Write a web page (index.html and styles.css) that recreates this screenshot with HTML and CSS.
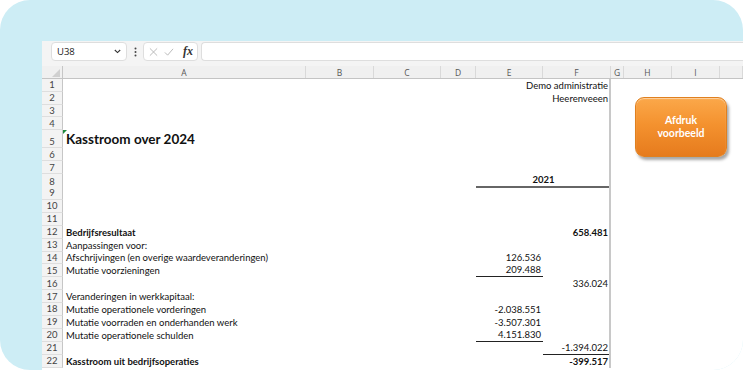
FILE: index.html
```html
<!DOCTYPE html>
<html lang="nl">
<head>
  <meta charset="UTF-8">
  <meta name="viewport" content="width=device-width, initial-scale=1.0">
  <title>Kasstroomoverzicht</title>
  <link rel="stylesheet" href="styles.css">
</head>
<body>
  <div class="frame">
    <div class="excel">
      <div class="formula-bar">
        <div class="name-box">
          <span>U38</span>
          <svg class="chevron" width="7" height="5" viewBox="0 0 7 5"><path d="M0.8 1 L3.5 3.6 L6.2 1" fill="none" stroke="#333" stroke-width="1.1"/></svg>
        </div>
        <svg class="grip" width="3" height="10" viewBox="0 0 3 10"><circle cx="1.5" cy="1.5" r="1" fill="#444"/><circle cx="1.5" cy="5" r="1" fill="#444"/><circle cx="1.5" cy="8.5" r="1" fill="#444"/></svg>
        <div class="fx-box">
          <svg width="10" height="10" viewBox="0 0 10 10"><path d="M1 1 L9 9 M9 1 L1 9" stroke="#b4b4b4" stroke-width="1"/></svg>
          <svg width="11" height="10" viewBox="0 0 11 10"><path d="M1 5.5 L4 8.5 L10 1.5" fill="none" stroke="#b4b4b4" stroke-width="1"/></svg>
          <span class="fx">fx</span>
        </div>
        <div class="formula-input"></div>
      </div>

      <div class="sheet">
        <div class="row head">
          <div class="corner"><svg width="8" height="8" viewBox="0 0 8 8"><path d="M8 0 L8 8 L0 8 Z" fill="#d0d0d0"/></svg></div>
          <div>A</div><div>B</div><div>C</div><div>D</div><div>E</div><div>F</div><div>G</div><div>H</div><div>I</div><div></div>
        </div>

        <div class="body">
          <div class="row top"><div class="rn">1</div><div class="cell num col-ef">Demo administratie</div></div>
          <div class="row top"><div class="rn">2</div><div class="cell num col-ef">Heerenveeen</div></div>
          <div class="row top"><div class="rn">3</div></div>
          <div class="row top"><div class="rn">4</div></div>
          <div class="row title"><div class="rn">5</div><div class="cell col-a flagged">Kasstroom over 2024</div></div>
          <div class="row"><div class="rn">6</div></div>
          <div class="row"><div class="rn">7</div></div>
          <div class="row"><div class="rn">8</div><div class="cell bold year col-ef">2021</div></div>
          <div class="row"><div class="rn">9</div></div>
          <div class="row"><div class="rn">10</div></div>
          <div class="row"><div class="rn">11</div></div>
          <div class="row"><div class="rn">12</div><div class="cell bold col-a">Bedrijfsresultaat</div><div class="cell bold num col-f">658.481</div></div>
          <div class="row"><div class="rn">13</div><div class="cell col-a">Aanpassingen voor:</div></div>
          <div class="row"><div class="rn">14</div><div class="cell col-a">Afschrijvingen (en overige waardeveranderingen)</div><div class="cell num col-e">126.536</div></div>
          <div class="row"><div class="rn">15</div><div class="cell col-a">Mutatie voorzieningen</div><div class="cell num line col-e">209.488</div></div>
          <div class="row"><div class="rn">16</div><div class="cell num col-f">336.024</div></div>
          <div class="row"><div class="rn">17</div><div class="cell col-a">Veranderingen in werkkapitaal:</div></div>
          <div class="row"><div class="rn">18</div><div class="cell col-a">Mutatie operationele vorderingen</div><div class="cell num col-e">-2.038.551</div></div>
          <div class="row"><div class="rn">19</div><div class="cell col-a">Mutatie voorraden en onderhanden werk</div><div class="cell num col-e">-3.507.301</div></div>
          <div class="row"><div class="rn">20</div><div class="cell col-a">Mutatie operationele schulden</div><div class="cell num line col-e">4.151.830</div></div>
          <div class="row"><div class="rn">21</div><div class="cell num line col-f">-1.394.022</div></div>
          <div class="row"><div class="rn">22</div><div class="cell bold col-a">Kasstroom uit bedrijfsoperaties</div><div class="cell bold num col-f">-399.517</div></div>
        </div>
      </div>

      <button class="print-btn">Afdruk<br>voorbeeld</button>
    </div>
  </div>
</body>
</html>
```

FILE: styles.css
```css
*, *::before, *::after {
  box-sizing: border-box;
}

:root {
  --frame-bg: #cdedf5;
  --bar-bg: #f4f4f4;
  --head-bg: #f0f0f0;
  --head-line: #d9d9d9;
  --text-color: #111;
  --cols: 21px 243px 68px 67px 35px 67px 68px 13px 48px 48px 1fr;
}

body {
  margin: 0;
  background: #fff;
  font-family: Lato, "Liberation Sans", sans-serif;
  color: var(--text-color);
}

.frame {
  width: 743px;
  height: 370px;
  background: var(--frame-bg);
  border-radius: 30px;
  padding: 41px 0 0 42px;
  overflow: hidden;
}

.excel {
  position: relative;
  height: 329px;
  background: #fff;
  overflow: hidden;
}

/* formula bar */
.formula-bar {
  display: flex;
  align-items: flex-start;
  height: 25px;
  padding: 1px 0 0 9px;
  background: var(--bar-bg);
  font-family: "Open Sans", "Liberation Sans", sans-serif;
}

.name-box {
  width: 76px;
  height: 19px;
  display: flex;
  align-items: center;
  justify-content: space-between;
  padding: 0 5px 0 5px;
  background: #fff;
  border: 1px solid #dedede;
  border-radius: 4px;
  font-size: 9.5px;
  color: #222;
}

.grip {
  margin: 5px 6px 0 7px;
}

.fx-box {
  width: 55px;
  height: 19px;
  display: flex;
  align-items: center;
  gap: 6px;
  padding: 0 4px 0 5px;
  background: #fff;
  border: 1px solid #dedede;
  border-radius: 4px;
}

.fx {
  font-family: "Liberation Serif", serif;
  font-style: italic;
  font-weight: bold;
  font-size: 12px;
  color: #333;
  margin-left: 3px;
}

.formula-input {
  flex: 1;
  height: 19px;
  margin-left: 3px;
  background: #fff;
  border: 1px solid #dedede;
  border-right: none;
  border-radius: 4px 0 0 4px;
}

/* sheet grid */
.row {
  display: grid;
  grid-template-columns: var(--cols);
  height: 12.9px;
}

.row.top {
  height: 12.8px;
}

.row.title {
  height: 18.2px;
}

.row.head {
  height: 13px;
  background: var(--head-bg);
  border-bottom: 1px solid #c4c4c4;
  font-family: "Open Sans", "Liberation Sans", sans-serif;
  font-size: 8.5px;
  color: #555;
}

.row.head div {
  display: flex;
  align-items: center;
  justify-content: center;
  border-right: 1px solid var(--head-line);
}

.row.head .corner {
  justify-content: flex-end;
  align-items: flex-end;
  padding: 0 2px 1px 0;
  border-right: 1px solid #c6c6c6;
}

.body {
  position: relative;
}

/* freeze line after column F */
.body::after {
  content: "";
  position: absolute;
  top: 0;
  bottom: 0;
  left: 567px;
  width: 2px;
  background: #c8c8c8;
}

.rn {
  grid-column: 1;
  display: flex;
  align-items: flex-end;
  justify-content: center;
  background: #f3f3f3;
  border-right: 1px solid #c6c6c6;
  border-bottom: 1px solid #dedede;
  font-size: 9.5px;
  line-height: 11.5px;
  color: #444;
}

.cell {
  display: flex;
  align-items: flex-end;
  padding: 0 2px 0 3px;
  white-space: nowrap;
  font-size: 9.5px;
  line-height: 12px;
}

.col-a { grid-column: 2; }
.col-e { grid-column: 6; }
.col-f { grid-column: 7; padding-right: 3px; }
.col-ef { grid-column: 6 / span 2; padding-right: 3px; }

.num {
  justify-content: flex-end;
}

.bold {
  font-weight: bold;
}

.line {
  border-bottom: 1px solid #222;
}

.year {
  justify-content: center;
  border-bottom: 2px solid #666;
}

.row.title .cell {
  font-size: 13.5px;
  line-height: 17px;
  font-weight: bold;
}

.flagged {
  position: relative;
}

.flagged::before {
  content: "";
  position: absolute;
  top: 0;
  left: 0;
  border-top: 4px solid #1e8a3c;
  border-right: 4px solid transparent;
}

/* macro button */
.print-btn {
  position: absolute;
  left: 593px;
  top: 56px;
  width: 92px;
  height: 60px;
  border: 1px solid #e0801f;
  border-radius: 9px;
  background: linear-gradient(#fba84a, #f4922f 45%, #e67b1d);
  box-shadow: 2px 3px 3px rgba(0, 0, 0, 0.35), inset 0 1px 1px rgba(255, 255, 255, 0.5);
  color: #fff;
  font-family: Lato, "Liberation Sans", sans-serif;
  font-weight: bold;
  font-size: 10.5px;
  line-height: 13px;
  padding: 0;
}
```
